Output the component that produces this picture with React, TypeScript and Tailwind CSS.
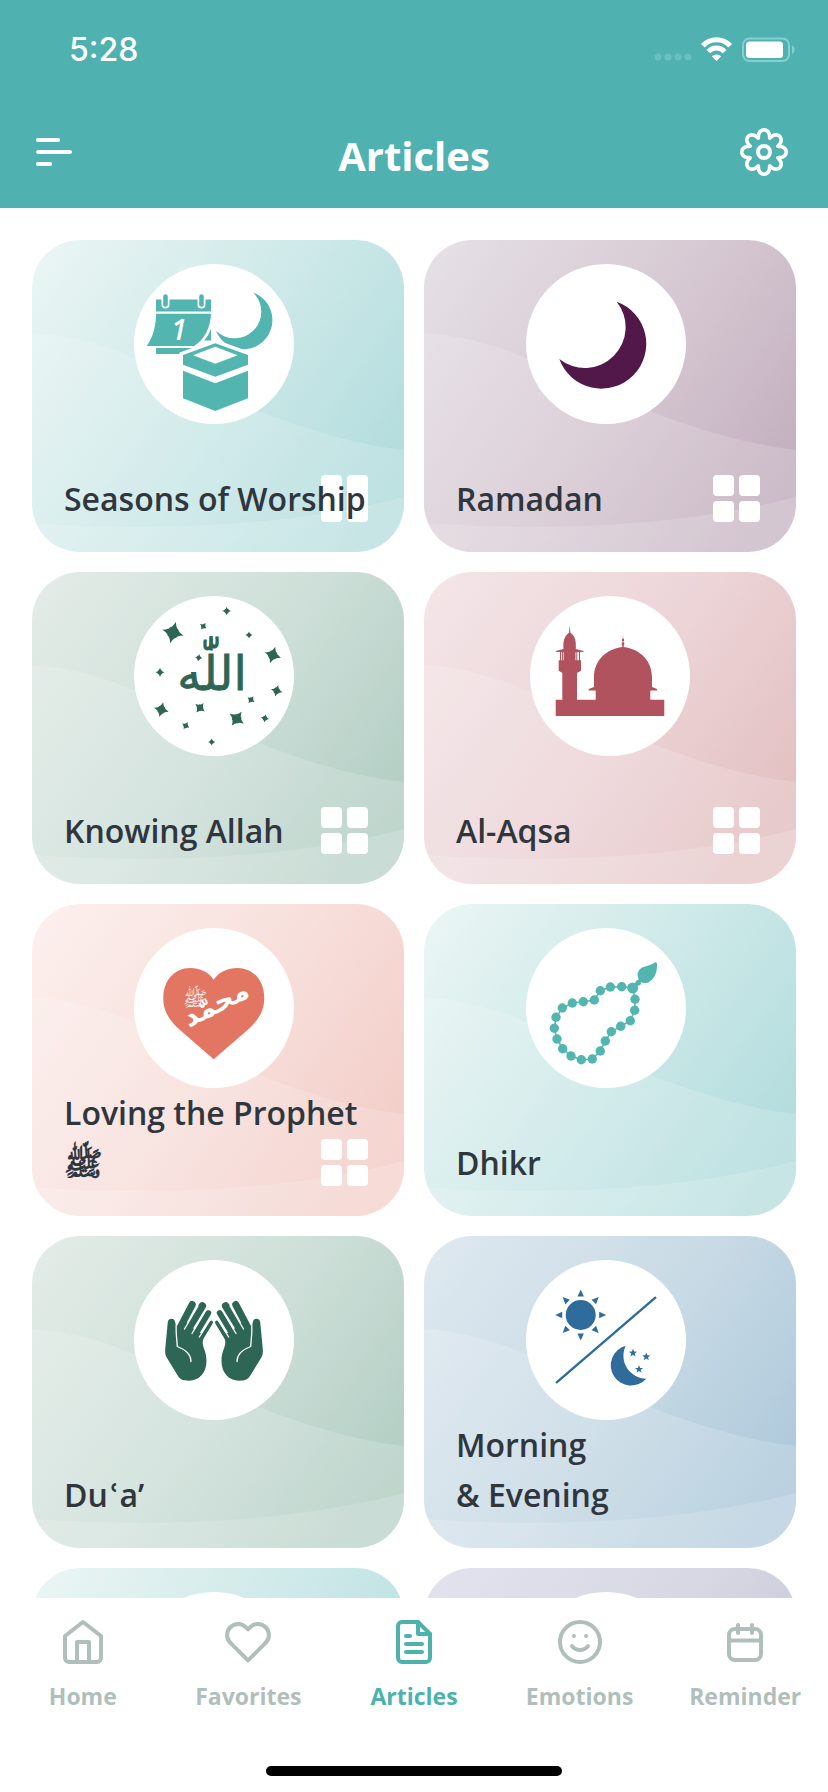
import React from 'react';
import { FiHome, FiHeart, FiFileText, FiSmile } from 'react-icons/fi';

const TEAL = '#52b5af';
const GREEN = '#2e6655';
const BLUE = '#2f6c9c';

/* ---------- header icons ---------- */

const gearPath = (() => {
  const points: string[] = [];
  for (let i = 0; i < 240; i++) {
    const t = (i / 240) * Math.PI * 2;
    const r = 18.6 + 3.6 * Math.cos(8 * t);
    const a = t + 0.09 * Math.sin(8 * t);
    points.push(`${(28 + r * Math.sin(a)).toFixed(2)} ${(28 - r * Math.cos(a)).toFixed(2)}`);
  }
  return `M${points.join('L')}Z`;
})();

const GearIcon = () => (
  <svg viewBox="0 0 56 56" className="size-14" fill="none" stroke="currentColor" strokeWidth={3.6} strokeLinejoin="round">
    <path d={gearPath} />
    <circle cx="28" cy="28" r="6" strokeWidth={4} />
  </svg>
);

const MenuIcon = () => (
  <svg viewBox="0 0 36 28" className="w-9 h-7" stroke="currentColor" strokeWidth={4} strokeLinecap="round">
    <path d="M2 2H22M2 14H34M2 26H14" />
  </svg>
);

const StatusIcons = () => (
  <svg viewBox="0 0 142 26" className="w-[142px] h-[26px]" fill="none">
    <g fill="#68c1bf">
      <circle cx="4" cy="20" r="3.6" />
      <circle cx="14" cy="20" r="3.6" />
      <circle cx="24" cy="20" r="3.6" />
      <circle cx="34" cy="20" r="3.6" />
    </g>
    <g stroke="#fff" strokeWidth={5}>
      <path d="M48.8 8.8A18.5 18.5 0 0 1 76.2 8.8" />
      <path d="M54.4 14.6A11 11 0 0 1 70.6 14.6" />
    </g>
    <path d="M62.5 24L57.8 19.2A7 7 0 0 1 67.2 19.2Z" fill="#fff" />
    <rect x="89" y="1.5" width="46" height="22.5" rx="6.5" stroke="#86d1d0" strokeWidth={2} />
    <rect x="92" y="4.5" width="37" height="16.5" rx="3.5" fill="#fff" />
    <path d="M138 8.5C141.5 10 141.5 15.5 138 17Z" fill="#86d1d0" />
  </svg>
);

const CalendarIcon = () => (
  <svg viewBox="0 0 24 24" className="size-12" fill="none" stroke="currentColor" strokeWidth={2} strokeLinecap="round" strokeLinejoin="round">
    <rect x="4" y="5.5" width="16" height="15.5" rx="3" />
    <path d="M8.5 3.5V7.5M15.5 3.5V7.5M4 11.2H20" />
  </svg>
);

/* ---------- card drawings, all on a 160x160 circle ---------- */

const Seasons = () => (
  <g fill={TEAL}>
    <path d="M22 35.5H77V47.5H22Z" />
    <g stroke="#fff" strokeWidth={8} strokeLinecap="round">
      <path d="M31.5 32.5V40.5M67.5 32.5V40.5" />
    </g>
    <g stroke={TEAL} strokeWidth={4.6} strokeLinecap="round">
      <path d="M31.5 32.5V40.5M67.5 32.5V40.5" />
    </g>
    <path d="M22 49.7H77C76.5 64 70 76 60 82H12.7C19.5 72.5 22 61 22 49.7Z" />
    <path d="M77 64.5V76.5H70C73.5 73 75.5 69 77 64.5ZM22 84H60V90H22Z" />
    <text x="45" y="75.5" textAnchor="middle" fontSize="28" fontWeight="600" fontStyle="italic" fontFamily="Open Sans, sans-serif" fill="#fff">1</text>
    <path d="M119.3 28.7A29.2 29.2 0 1 1 82 66.7A26.3 26.3 0 0 0 119.3 28.7Z" />
    <path d="M49 91L81.300 79.3L114 91V134.3L81.3 147L49 134.3Z" fill="#fff" stroke="#fff" strokeWidth={7} />
    <path d="M49 91L81.3 79.3L114 91V100.7L81.3 112.7L49 100.7Z" />
    <path d="M59 91.3L81.3 82.7L103.7 91.3L81.3 99.7Z" fill="#fff" />
    <path d="M49 106.7L81.3 119.3L114 106.7V134.3L81.3 147L49 134.3Z" />
  </g>
);

const Ramadan = () => (
  <path d="M90.7 37.7A44.8 44.8 0 1 1 33.3 95A40.8 40.8 0 0 0 90.7 37.7Z" fill="#52184a" />
);

const sparkles = [
  [39, 36.7, 11, 15], [92.7, 15, 4.3, 0], [69.3, 30.3, 4, 35], [115, 39, 3.6, 0], [138.7, 59, 8.6, 18],
  [64.7, 61.7, 3.8, 10], [26, 76.3, 4.5, 0], [142.7, 94.7, 6, 15], [117, 103.7, 4.3, 35], [27.3, 113.7, 7.6, 15],
  [66, 111.7, 6, 38], [102.7, 122.7, 8.6, 35], [131, 122.3, 4.2, 10], [51.7, 129.7, 4.2, 30], [77.7, 146, 3.6, 0],
];

const Allah = () => (
  <g fill={GREEN}>
    {sparkles.map(([x, y, r, rot]) => (
      <path
        key={`${x}-${y}`}
        d="M0 -10Q2 -4 4 -4Q4 -2 10 0Q4 2 4 4Q2 4 0 10Q-2 4 -4 4Q-4 2 -10 0Q-4 -2 -4 -4Q-2 -4 0 -10Z"
        transform={`translate(${x} ${y}) rotate(${rot}) scale(${r / 10})`}
      />
    ))}
    <text x="78" y="94" textAnchor="middle" fontSize="48" stroke={GREEN} strokeWidth={0.8} fontFamily="DejaVu Sans, sans-serif">اللّٰه</text>
  </g>
);

const Aqsa = () => (
  <g fill="#b0535e">
    <path d="M25.7 103.7H32.3V77L28.7 74.7V64.3H33.7V56.3L25.7 55.8V55L33.5 53C33 45 34 41 39 36.5L39.7 29.5L40.4 36.5C45.5 41 46.2 45 45.8 53L53.7 55V55.8L45.5 56.3V64.3H51V74.7L47 77V103.7H65.7V94.5H58.7V93L64 91V81C64 65 76 53 92.2 51L93 38L93.8 51C110 53 122 65 122 81V91L127 93V94.5H120.3V103.7H134.3V120H25.7Z" />
    <path d="M30 55.5H31V65H30ZM32 55.5H33V65H32ZM46.3 55.5H47.3V65H46.3ZM49 55.5H50V65H49Z" />
    <circle cx="93" cy="44" r="1.2" />
    <circle cx="93" cy="48" r="1.4" />
  </g>
);

const Prophet = () => (
  <g>
    <path d="M79.7 131.3L46 102C36 93 29.3 84 29.3 70C29.3 52 41 40 56 40C66 40 74.5 44 79.7 51.7C85 44 93.5 40 103.5 40C118.5 40 130.3 52 130.3 70C130.3 84 123.5 93 113.5 102Z" fill="#e27663" />
    <g fill="#fff" textAnchor="middle" fontFamily="DejaVu Sans, sans-serif">
      <text x="0" y="0" fontSize="27" fontWeight="700" transform="translate(86 84) rotate(-27)">محمّد</text>
      <text x="61" y="78" fontSize="20">ﷺ</text>
    </g>
  </g>
);

const beads = [
  [109, 71.3], [108.7, 82.3], [104.3, 92.7], [94.7, 98.3], [85.3, 103.7], [79.3, 113], [74.3, 123],
  [66.3, 131], [55.3, 131.7], [45, 128], [36.7, 120.7], [31, 111], [28.3, 100.3], [30, 89.3], [36.3, 80],
  [46.3, 75], [57.3, 73.7], [68.3, 72], [74.3, 62.7], [84.3, 59], [95.7, 58.7], [106.7, 60],
];

const Dhikr = () => (
  <g fill={TEAL}>
    <polygon points={beads.map((b) => b.join(',')).join(' ')} fill="none" stroke={TEAL} strokeWidth={1.5} />
    {beads.map(([x, y]) => (
      <circle key={`${x}-${y}`} cx={x} cy={y} r={x === 106.7 ? 5.5 : 4.7} />
    ))}
    <path d="M106.7 60L115 51" stroke={TEAL} strokeWidth={3} />
    <circle cx="112.3" cy="54.7" r="2.8" />
    <path d="M114 53.5C108.5 45 113 39.5 121 38C125 37 127 35.5 129 34.3L131 35C131.5 45 128 52 122 54.5C119 55.5 116 55 114 53.5Z" />
  </g>
);

const Hand = () => (
  <g fill={GREEN} stroke={GREEN} strokeLinecap="round">
    <g strokeWidth={7}>
      <path d="M46.5 67L58.3 44.5" />
      <path d="M53 71L68.3 46" strokeWidth={7.5} />
      <path d="M60 77L74.3 53" strokeWidth={5.8} />
      <path d="M67 79L77 62.5" strokeWidth={4} />
    </g>
    <path d="M33.8 62C34.2 57.5 41 57.5 41 62L43 66L52 62L60 69L70 75L69 80C67.5 87 72.5 90 72.5 101C72.5 113 65 120.7 55 120.7C48 120.7 46 119 44 116L33 98C31 95 31 92 31.3 88Z" stroke="none" />
    <g fill="none" stroke="#fff" strokeWidth={1.3}>
      <path d="M50.5 69L64 46" />
      <path d="M58 73.5L71.8 50" />
      <path d="M65.3 77L77 58.5" />
      <path d="M42.3 63C41.5 72 43 80 43.3 86.5C50 89 57 94 57 101.5" />
    </g>
  </g>
);

const Dua = () => (
  <g>
    <Hand />
    <g transform="translate(160 0) scale(-1 1)">
      <Hand />
    </g>
  </g>
);

const MorningEvening = () => (
  <g fill={BLUE}>
    <circle cx="54.7" cy="55" r="15" />
    {[0, 45, 90, 135, 180, 225, 270, 315].map((deg) => (
      <path key={deg} d="M0 -25.5L3.2 -18.5H-3.2Z" transform={`translate(54.7 55) rotate(${deg})`} />
    ))}
    <path d="M30.7 122.3L129.3 37.7" stroke={BLUE} strokeWidth={2.4} strokeLinecap="round" />
    <path d="M99.7 85.7A20.3 20.3 0 1 0 120.3 118.7A23 23 0 0 1 99.7 85.7Z" />
    {[[107, 93], [120.3, 96.7], [113, 109.3]].map(([x, y]) => (
      <path key={x} d="M0 -4.2L1.1 -1.4L4.1 -1.3L1.7 0.6L2.5 3.5L0 1.8L-2.5 3.5L-1.7 0.6L-4.1 -1.3L-1.1 -1.4Z" transform={`translate(${x} ${y})`} />
    ))}
  </g>
);

/* ---------- cards ---------- */

const tones = {
  teal: 'bg-[linear-gradient(125deg,#ebf6f4,#cce8e8_50%,#b2dcdd_90%)]',
  purple: 'bg-[linear-gradient(125deg,#e6e1e7,#d6c8d2_50%,#c3afbf_90%)]',
  green: 'bg-[linear-gradient(125deg,#e4ece8,#cddfd8_50%,#b3cec4_90%)]',
  rose: 'bg-[linear-gradient(125deg,#f4e6e8,#ecd4d7_50%,#e3c0c1_90%)]',
  coral: 'bg-[linear-gradient(125deg,#fcf0ee,#f7dfdb_50%,#f3cdc7_90%)]',
  blue: 'bg-[linear-gradient(125deg,#dfe9f0,#c8dae5_50%,#aec9db_90%)]',
  lavender: 'bg-[linear-gradient(125deg,#e3e3ef,#d6d7e2_50%,#c4c5d6_90%)]',
};

interface Card {
  title: string;
  tone: keyof typeof tones;
  art?: React.ReactNode;
  grid?: 'tiles' | 'bars';
  centered?: boolean;
}

const cards: Card[] = [
  { title: 'Seasons of Worship', tone: 'teal', art: <Seasons />, grid: 'bars' },
  { title: 'Ramadan', tone: 'purple', art: <Ramadan />, grid: 'tiles' },
  { title: 'Knowing Allah', tone: 'green', art: <Allah />, grid: 'tiles' },
  { title: 'Al-Aqsa', tone: 'rose', art: <Aqsa />, grid: 'tiles', centered: true },
  { title: 'Loving the Prophet\nﷺ', tone: 'coral', art: <Prophet />, grid: 'tiles' },
  { title: 'Dhikr', tone: 'teal', art: <Dhikr /> },
  { title: 'Duʿa’', tone: 'green', art: <Dua /> },
  { title: 'Morning\n& Evening', tone: 'blue', art: <MorningEvening /> },
  { title: '', tone: 'teal' },
  { title: '', tone: 'lavender' },
];

const GridBadge = ({ kind }: { kind: 'tiles' | 'bars' }) => (
  <svg viewBox="0 0 47 47" className="absolute right-9 bottom-[30px] size-[47px]" fill="#fff">
    {kind === 'bars' ? (
      <>
        <rect width="21" height="47" rx="4" />
        <rect x="26" width="21" height="47" rx="4" />
      </>
    ) : (
      <>
        <rect width="21" height="21" rx="4" />
        <rect x="26" width="21" height="21" rx="4" />
        <rect y="26" width="21" height="21" rx="4" />
        <rect x="26" y="26" width="21" height="21" rx="4" />
      </>
    )}
  </svg>
);

const ArticleCard: React.FC<Card> = ({ title, tone, art, grid, centered }) => (
  <a href="#article" className={`relative flex h-78 flex-col overflow-hidden rounded-[48px] pt-6 pb-7 ${tones[tone]}`}>
    {/* soft waves over the gradient */}
    <svg viewBox="0 0 372 312" preserveAspectRatio="none" className="absolute inset-0 size-full" fill="#fff">
      <path d="M0 93C70 98 110 122 180 152C250 182 310 203 372 210V312H0Z" fillOpacity="0.16" />
      <path d="M0 283C130 292 260 286 372 257V312H0Z" fillOpacity="0.16" />
    </svg>
    <span className={`relative size-40 shrink-0 self-center rounded-full bg-white ${centered ? '' : 'mr-2'}`}>
      <svg viewBox="0 0 160 160" className="size-full">{art}</svg>
    </span>
    {grid && <GridBadge kind={grid} />}
    <span className="relative mt-auto pl-8 whitespace-pre-line font-['Open_Sans','DejaVu_Sans',sans-serif] text-[32px] leading-[50px] font-semibold text-[#2f363d]">
      {title}
    </span>
  </a>
);

const tabs = [
  { label: 'Home', icon: <FiHome size={48} /> },
  { label: 'Favorites', icon: <FiHeart size={48} /> },
  { label: 'Articles', icon: <FiFileText size={48} />, active: true },
  { label: 'Emotions', icon: <FiSmile size={48} /> },
  { label: 'Reminder', icon: <CalendarIcon /> },
];

const App: React.FC = () => {
  return (
    <div className="flex h-screen flex-col overflow-hidden bg-white font-['Open_Sans',sans-serif]">
      <header className="shrink-0 bg-[#50b1b1] pb-7 text-white">
        <div className="flex items-center justify-between pt-[34px] pr-8 pl-[69px]">
          <time className="font-['Inter',sans-serif] text-[32px] leading-8 font-medium">5:28</time>
          <StatusIcons />
        </div>
        <div className="mt-[58px] grid grid-cols-[1fr_auto_1fr] items-center px-9">
          <button type="button" aria-label="Menu" className="justify-self-start">
            <MenuIcon />
          </button>
          <h1 className="pt-2 text-[40px] leading-12 font-bold">Articles</h1>
          <button type="button" aria-label="Settings" className="justify-self-end">
            <GearIcon />
          </button>
        </div>
      </header>

      <main className="min-h-0 flex-1 overflow-hidden">
        <div className="grid grid-cols-2 gap-5 px-8 pt-8">
          {cards.map((card, i) => (
            <ArticleCard key={i} {...card} />
          ))}
        </div>
      </main>

      <nav className="shrink-0 bg-white pt-5 pb-4">
        <div className="grid grid-cols-5">
          {tabs.map((tab) => (
            <a
              key={tab.label}
              href={`#${tab.label.toLowerCase()}`}
              className={`flex flex-col items-center gap-[14px] ${tab.active ? 'text-[#4db1ae]' : 'text-[#b0bfbb]'}`}
            >
              {tab.icon}
              <span className="text-[23px] leading-8 font-bold">{tab.label}</span>
            </a>
          ))}
        </div>
        <div className="mx-auto mt-[54px] h-[10px] w-[296px] rounded-full bg-black" />
      </nav>
    </div>
  );
};

export default App;
